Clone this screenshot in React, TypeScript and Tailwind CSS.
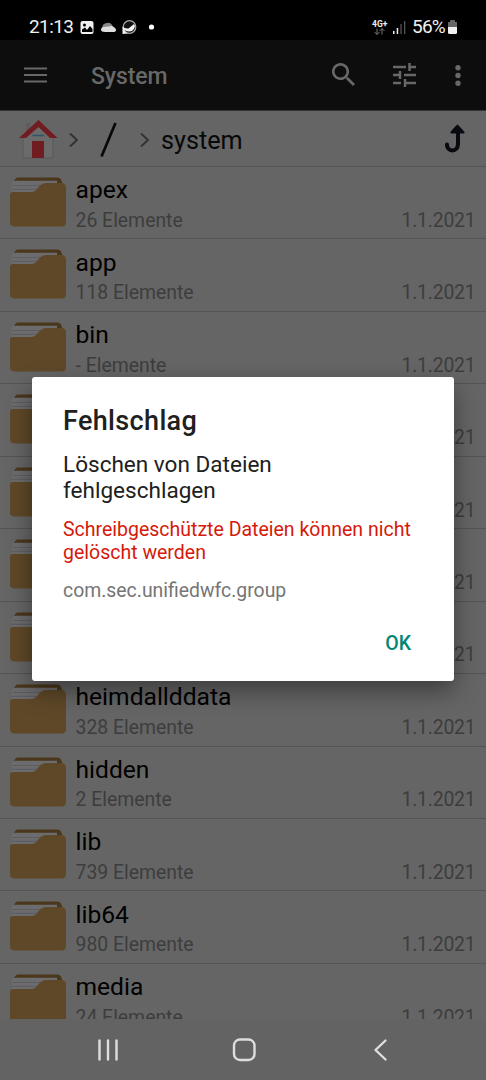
import type { ReactNode } from "react";

type Entry = { name: string; count: string };

const entries: Entry[] = [
  { name: "apex", count: "26 Elemente" },
  { name: "app", count: "118 Elemente" },
  { name: "bin", count: "- Elemente" },
  { name: "", count: "" },
  { name: "", count: "" },
  { name: "", count: "" },
  { name: "", count: "" },
  { name: "heimdallddata", count: "328 Elemente" },
  { name: "hidden", count: "2 Elemente" },
  { name: "lib", count: "739 Elemente" },
  { name: "lib64", count: "980 Elemente" },
  { name: "media", count: "24 Elemente" },
];

function Folder() {
  return (
    <svg className="mt-[10px] h-[50px] w-14 shrink-0" viewBox="0 0 56 50">
      <path d="M4 5Q5 0.500 8 0.500H47Q51 0.500 51.500 4L53 8H4Z" fill="#4b371c" />
      <path d="M1.500 8Q2 3.800 6 3.800H47V8L30 15.500H1.500Z" fill="#6c6c6e" />
      <path d="M2.500 8.500H31M1.500 12.300H28" stroke="#57595d" strokeWidth="0.8" />
      <path d="M0 18Q0 15 3 15H22Q25 15 27 12L30 8.500Q32 6 36 6H51Q56 6 56 11V45Q56 49.500 51.500 49.500H4.500Q0 49.500 0 45Z" fill="#5f4828" />
    </svg>
  );
}

function Row({ entry }: { entry: Entry }) {
  return (
    <div className="flex h-[72.45px] shrink-0 border-b border-[#545454] pr-[10.500px] pl-[10px]">
      <Folder />
      <div className="ml-[9.500px] flex grow flex-col">
        <div className="mt-[8.300px] h-[29px] text-[24.600px] leading-[29px] text-black">{entry.name}</div>
        <div className="mt-[4.500px] flex h-6 justify-between text-[19.400px] leading-6 text-[#3d3d3d]">
          <span>{entry.count}</span>
          <span className="tracking-[-0.200px]">1.1.2021</span>
        </div>
      </div>
    </div>
  );
}

function StatusBar() {
  return (
    <div className="flex h-10 shrink-0 items-start bg-black pt-[15px] pl-[29px] text-[#f0f0f0]">
      <div className="w-[51px] text-[19px] leading-6 tracking-[-0.600px]">21:13</div>
      <svg className="mt-[5px] h-[15px] w-[76px]" viewBox="0 0 76 15">
        <rect x="0.500" y="1" width="13" height="13" rx="2" fill="#f0f0f0" />
        <circle cx="4.500" cy="5" r="1.500" fill="#000" />
        <path d="M2 12V9.500L5 7.500L7 10L10 6L12.500 9V12Z" fill="#000" />
        <path d="M22 9Q22 3 27 3Q31 2 33 7L35 10H23Z" fill="#888" />
        <path d="M25 12Q21 12 21 9.500Q21 7.500 24 7L32 6Q36 8 36 10Q36 12 33 12Z" fill="#ddd" />
        <circle cx="49.500" cy="7" r="6.300" fill="#111" stroke="#aaa" strokeWidth="1.200" />
        <path d="M42.500 14V6.500Q45 9 48.500 8.500L54 4L55 6Q54 11.500 49 11.500Q46 11.500 44 9.500Q45.500 13 48 13.500Z" fill="#f2f2f2" />
        <circle cx="71.500" cy="7" r="2.600" fill="#fff" />
      </svg>
      <div className="ml-[216px] flex w-[16px] flex-col pt-[5px]">
        <div className="h-2 text-[8.500px] leading-2 font-bold">4G+</div>
        <svg className="ml-[2px] h-2 w-3" viewBox="0 0 12 8" fill="none" stroke="#777" strokeWidth="1">
          <path d="M3 0.500V6.500M0.500 4L3 6.500L5.500 4M8 6.500V0.500M5.500 3L8 0.500L10.500 3" />
        </svg>
      </div>
      <svg className="mt-[5px] ml-[5px] h-[14px] w-[14px]" viewBox="0 0 14 14">
        <path d="M0 11H1.500V14H0ZM3.700 8H5.200V14H3.700Z" fill="#eee" />
        <path d="M7.400 4H8.700V14H7.400ZM11 1H12.300V14H11Z" fill="#555" />
      </svg>
      <div className="ml-[5px] w-[35px] text-[19px] leading-6 tracking-[-0.800px]">56%</div>
      <svg className="mt-[5px] h-[15px] w-[11px]" viewBox="0 0 11 15">
        <path d="M3 1Q3 0 4 0H7Q8 0 8 1V2H10V7H1V2H3Z" fill="#666" />
        <path d="M1 7H10V12.500Q10 14 8.500 14H2.500Q1 14 1 12.500Z" fill="#f0f0f0" />
      </svg>
    </div>
  );
}

function AppBar() {
  return (
    <div className="flex h-[70px] shrink-0 items-center bg-[#0d0d0d] pl-6 text-[#686868]">
      <svg className="h-4 w-[23px]" viewBox="0 0 23 16" stroke="currentColor" strokeWidth="2.200">
        <path d="M0 1.500H23M0 8H23M0 14.500H23" />
      </svg>
      <div className="mt-[3px] ml-11 w-[241px] text-[23px] leading-7 font-medium tracking-[-0.100px]">System</div>
      <svg className="mt-[-1px] h-[23px] w-[23px] shrink-0" viewBox="3 3 17.500 17.500" fill="currentColor">
        <path d="M15.500 14h-.79l-.28-.27C15.410 12.590 16 11.110 16 9.500 16 5.910 13.090 3 9.500 3S3 5.910 3 9.500 5.910 16 9.500 16c1.610 0 3.090-.59 4.230-1.570l.27.28v.79l5 4.990L20.490 19l-4.990-5zm-6 0C7.010 14 5 11.990 5 9.500S7.010 5 9.500 5 14 7.010 14 9.500 11.990 14 9.500 14z" />
      </svg>
      <svg className="ml-[38px] h-6 w-[23px] shrink-0" viewBox="0 0 23 24" stroke="currentColor" strokeWidth="2.500" fill="none">
        <path d="M0 4H13M16.500 4H23M16.500 0V8M0 12H7M7 8V16M11 12H23M0 20H8M12 20H23M12 16V24" />
      </svg>
      <svg className="ml-[39px] h-[21px] w-[6px] shrink-0" viewBox="0 0 6 21" fill="currentColor">
        <circle cx="3" cy="2.800" r="2.700" />
        <circle cx="3" cy="10.500" r="2.700" />
        <circle cx="3" cy="18.200" r="2.700" />
      </svg>
    </div>
  );
}

function Chevron() {
  return (
    <svg className="mt-[2px] h-4 w-[10px] shrink-0" viewBox="0 0 10 16" fill="none" stroke="#303030" strokeWidth="1.800">
      <path d="M1 1.500L8 8L1 14.500" />
    </svg>
  );
}

function Breadcrumbs() {
  return (
    <div className="flex h-[57px] shrink-0 items-center border-t border-b border-[#545454] border-t-[#333] pl-[19px]">
      <svg className="mt-px h-[39px] w-[39px]" viewBox="0 0 39 39">
        <path d="M7 3H11V11H7Z" fill="#5b5b60" />
        <path d="M4 17L19.500 4L34 17V38H4Z" fill="#6b6b6b" stroke="#555" strokeWidth="0.700" />
        <path d="M0 18L19.500 0L38.500 18H31L19.500 7L7 18Z" fill="#711c20" />
        <path d="M13.500 15.500H25" stroke="#28576b" strokeWidth="1.500" />
        <path d="M13 21H25V38H13Z" fill="#711c20" />
      </svg>
      <div className="ml-[11px]"><Chevron /></div>
      <svg className="mt-[2px] ml-[21px] h-9 w-[18px]" viewBox="0 0 18 36">
        <path d="M1.500 34.500L15.500 1" stroke="#080808" strokeWidth="2.700" />
      </svg>
      <div className="ml-[22px]"><Chevron /></div>
      <div className="mt-[4px] ml-[11px] w-[284px] text-[25.200px] leading-8 text-[#080808]">system</div>
      <svg className="h-[29px] w-5" viewBox="0 0 20 29">
        <path d="M2 20.500C1.500 28 13 29 13 20V8" fill="none" stroke="#080a10" strokeWidth="4" strokeLinecap="round" />
        <path d="M12.500 0.500Q13 0.500 19.500 8Q20 9.500 18.500 9.500H6.500Q5 9.500 5.500 8Q11.500 0.500 12.500 0.500Z" fill="#080a10" />
      </svg>
    </div>
  );
}

function NavIcon({ children }: { children: ReactNode }) {
  return (
    <svg className="h-6 w-6" viewBox="0 0 24 24" fill="none" stroke="#dedede" strokeWidth="2.400" strokeLinecap="round" strokeLinejoin="round">
      {children}
    </svg>
  );
}

function Dialog() {
  return (
    <div className="h-[304px] w-[421.500px] rounded-[3px] bg-white pt-[28px] pr-[42.500px] pl-[31px] shadow-[0_10px_24px_rgba(0,0,0,0.4)]">
      <h2 className="text-[27px] leading-8 font-medium tracking-[0.350px] text-[#202020]">Fehlschlag</h2>
      <p className="mt-[15px] text-[22.550px] leading-[26px] whitespace-nowrap text-[#202020]">
        Löschen von Dateien
        <br />
        fehlgeschlagen
      </p>
      <p className="mt-[14px] text-[19.500px] leading-[23px] whitespace-nowrap text-[#d5190b]">
        Schreibgeschützte Dateien können nicht
        <br />
        gelöscht werden
      </p>
      <p className="mt-[15px] text-[19.400px] leading-[23px] text-[#757575]">com.sec.unifiedwfc.group</p>
      <div className="mt-[30px] flex justify-end text-[19.500px] leading-6 font-medium text-[#008577]">
        <button>OK</button>
      </div>
    </div>
  );
}

export default function App() {
  return (
    <div className="relative flex h-[1080px] w-[486px] flex-col overflow-hidden bg-[#656565] font-[Roboto,sans-serif]">
      <StatusBar />
      <AppBar />
      <Breadcrumbs />
      <div className="flex min-h-0 grow flex-col overflow-hidden">
        {entries.map((entry, i) => (
          <Row key={i} entry={entry} />
        ))}
      </div>
      <div className="flex h-[61px] shrink-0 items-center bg-[#636363] pl-24">
        <NavIcon>
          <path d="M3.500 2.500V21.500M12 2.500V21.500M20.500 2.500V21.500" />
        </NavIcon>
        <div className="ml-[112px]">
          <NavIcon>
            <rect x="2" y="1.500" width="20.500" height="20.500" rx="6" />
          </NavIcon>
        </div>
        <div className="ml-[113px]">
          <NavIcon>
            <path d="M16.500 2.500L6.500 12L16.500 21.500" />
          </NavIcon>
        </div>
      </div>
      <div className="absolute top-[377px] left-8">
        <Dialog />
      </div>
    </div>
  );
}
